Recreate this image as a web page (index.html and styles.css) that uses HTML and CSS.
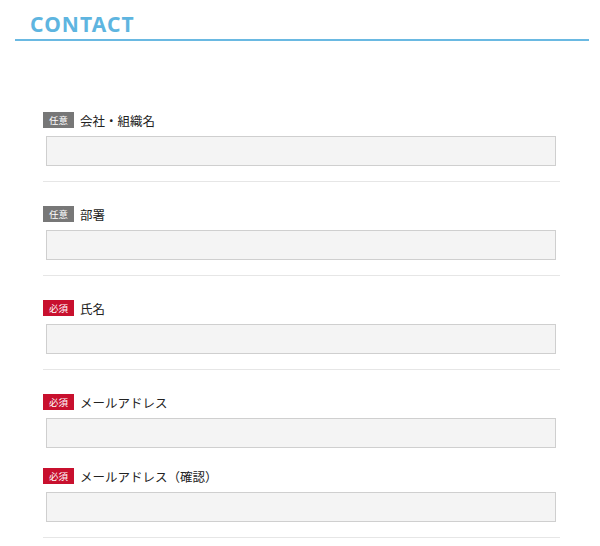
FILE: index.html
```html
<!DOCTYPE html>
<html lang="ja">
<head>
  <meta charset="UTF-8">
  <meta name="viewport" content="width=device-width, initial-scale=1.0">
  <title>Contact</title>
  <link rel="stylesheet" href="styles.css">
</head>
<body>
  <h1 class="title">CONTACT</h1>

  <form class="contact-form">
    <div class="field">
      <label class="field-label" for="company"><span class="badge optional">任意</span>会社・組織名</label>
      <input type="text" id="company">
    </div>

    <div class="field">
      <label class="field-label" for="dept"><span class="badge optional">任意</span>部署</label>
      <input type="text" id="dept">
    </div>

    <div class="field">
      <label class="field-label" for="name"><span class="badge required">必須</span>氏名</label>
      <input type="text" id="name">
    </div>

    <div class="field">
      <label class="field-label" for="email"><span class="badge required">必須</span>メールアドレス</label>
      <input type="email" id="email">
      <label class="field-label sub" for="email2"><span class="badge required">必須</span>メールアドレス（確認）</label>
      <input type="email" id="email2">
    </div>
  </form>
</body>
</html>
```

FILE: styles.css
```css
/* General Styles */
* {
  margin: 0;
  padding: 0;
  box-sizing: border-box;
}

body {
  font-family: "Noto Sans CJK JP", "Noto Sans", sans-serif;
  background: #fff;
  color: #222;
  width: 600px;
  height: 546px;
  overflow: hidden;
}

.title {
  margin: 11px 11px 0 15px;
  padding: 0 0 2px 15px;
  font-family: "Noto Sans", sans-serif;
  font-size: 21px;
  font-weight: bold;
  letter-spacing: 1.1px;
  line-height: 26px;
  color: #5eb5e0;
  border-bottom: 2px solid #6ab9e2;
}

.contact-form {
  margin: 47px 40px 0 43px;
}

.field {
  padding: 22px 0 15px;
  border-bottom: 1px solid #e6e6e6;
}

.field-label {
  display: flex;
  align-items: center;
  gap: 6px;
  height: 20px;
  margin-bottom: 6px;
  font-size: 12.5px;
}

.field-label.sub {
  margin-top: 18px;
}

.badge {
  display: inline-block;
  width: 31px;
  height: 16px;
  line-height: 16px;
  text-align: center;
  font-size: 9.5px;
  color: #fff;
}

.optional {
  background: #777;
}

.required {
  background: #c8102e;
}

input {
  display: block;
  width: 510px;
  height: 30px;
  margin-left: 3px;
  background: #f4f4f4;
  border: 1px solid #cfcfcf;
  font-size: 13px;
}
```
